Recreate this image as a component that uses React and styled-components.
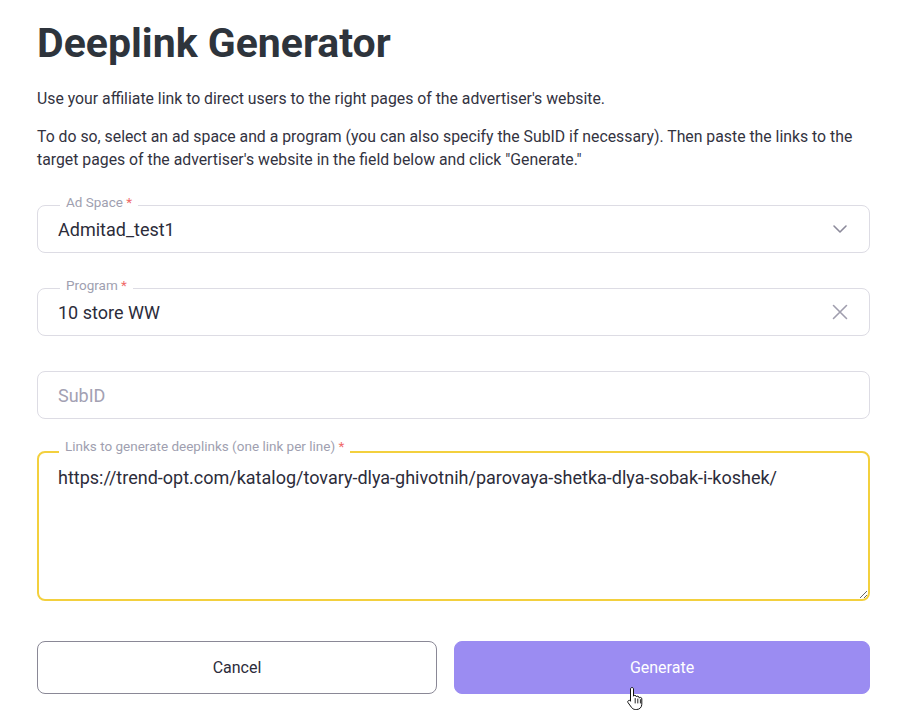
import React from "react";
import styled, { createGlobalStyle } from "styled-components";

const GlobalStyle = createGlobalStyle`
  html, body {
    margin: 0;
    padding: 0;
    background: #ffffff;
  }
  body {
    font-family: Roboto, "Noto Sans", sans-serif;
    color: #2f2f3b;
  }
  * {
    box-sizing: border-box;
  }
`;

const Page = styled.main`
  width: 914px;
  padding: 19px 44px 30px 37px;
`;

const Title = styled.h1`
  margin: 0 0 20px;
  font-size: 41px;
  line-height: 48px;
  font-weight: 700;
  color: #2e343c;
`;

const Text = styled.p`
  margin: 0 0 15px;
  font-size: 15.8px;
  line-height: 23px;
  color: #33333f;
`;

const Form = styled.form`
  display: flex;
  flex-direction: column;
  gap: 35px;
  margin-top: 34px;
`;

const Field = styled.div`
  position: relative;
  display: flex;
  align-items: center;
  height: 48px;
  border: 1px solid #dddce4;
  border-radius: 8px;
`;

const FloatLabel = styled.span`
  position: absolute;
  top: ${(p) => (p.$thick ? "-13px" : "-12px")};
  left: 22px;
  padding: 0 6px;
  background: #ffffff;
  font-size: 13.5px;
  line-height: 16px;
  color: #a09fb0;
  white-space: nowrap;
`;

const Required = styled.span`
  color: #f06a6a;
`;

const Input = styled.input`
  flex: 1;
  min-width: 0;
  height: 100%;
  padding: 0 20px;
  border: none;
  background: transparent;
  outline: none;
  font-family: inherit;
  font-size: 18px;
  color: #2c2c3a;

  &::placeholder {
    color: #a3a1b3;
  }
`;

const IconButton = styled.button`
  display: flex;
  align-items: center;
  justify-content: center;
  width: 24px;
  height: 24px;
  margin-right: 17px;
  padding: 0;
  border: none;
  background: none;
  color: #8c8a9b;
  cursor: pointer;
`;

const TextAreaWrap = styled.div`
  position: relative;
  margin-top: -3px;
`;

const TextArea = styled.textarea`
  display: block;
  width: 100%;
  height: 150px;
  padding: 13px 19px;
  border: 2px solid #f3d03e;
  border-radius: 8px;
  outline: none;
  resize: vertical;
  font-family: inherit;
  font-size: 18px;
  line-height: 24px;
  color: #2c2c3a;
`;

const Actions = styled.div`
  display: grid;
  grid-template-columns: 400px 1fr;
  gap: 17px;
  margin-top: 5px;
`;

const Button = styled.button`
  position: relative;
  height: 53px;
  border-radius: 8px;
  font-family: inherit;
  font-size: 16px;
  cursor: pointer;
  border: 1px solid ${(p) => (p.$primary ? "#9b8cf2" : "#8a8896")};
  background: ${(p) => (p.$primary ? "#9b8cf2" : "#ffffff")};
  color: ${(p) => (p.$primary ? "#ffffff" : "#2c2c3a")};
`;

const Pointer = styled.svg`
  position: absolute;
  left: 172px;
  top: 44px;
  width: 17px;
  height: 24px;
  pointer-events: none;
`;

const ChevronDown = () => (
  <svg width="18" height="18" viewBox="0 0 18 18" fill="none">
    <path d="M3 6l6 6 6-6" stroke="currentColor" strokeWidth="1.6" strokeLinecap="round" strokeLinejoin="round" />
  </svg>
);

const Cross = () => (
  <svg width="18" height="18" viewBox="0 0 18 18" fill="none">
    <path d="M2.5 2.5l13 13M15.5 2.5l-13 13" stroke="#a09eae" strokeWidth="1.6" strokeLinecap="round" />
  </svg>
);

const HandCursor = () => (
  <Pointer viewBox="0 0 17 24">
    <path
      d="M5 1.5c.9 0 1.5.7 1.5 1.5v7.2c.3-.6.8-.9 1.4-.9.8 0 1.4.6 1.4 1.4v.3c.3-.5.8-.8 1.4-.8.8 0 1.4.6 1.4 1.4v.5c.3-.4.8-.7 1.3-.7.8 0 1.4.6 1.4 1.4v5.5c0 2.9-2.2 5.2-5.1 5.2H8.4c-1.6 0-3-.8-3.9-2.1L1 16.6c-.5-.7-.3-1.6.4-2 .6-.4 1.4-.3 1.9.3l.2.3V3c0-.8.7-1.5 1.5-1.5z"
      fill="#ffffff"
      stroke="#111111"
      strokeWidth="1"
      strokeLinejoin="round"
    />
    <path d="M8.2 12.5v4.5M10.8 13v4M13.4 13.6v3.4" stroke="#111111" strokeWidth="0.9" strokeLinecap="round" />
  </Pointer>
);

export default function App() {
  return (
    <Page>
      <GlobalStyle />
      <Title>Deeplink Generator</Title>
      <Text>Use your affiliate link to direct users to the right pages of the advertiser's website.</Text>
      <Text>
        To do so, select an ad space and a program (you can also specify the SubID if necessary). Then paste the
        links to the target pages of the advertiser's website in the field below and click "Generate."
      </Text>

      <Form onSubmit={(e) => e.preventDefault()}>
        <Field>
          <FloatLabel>
            Ad Space <Required>*</Required>
          </FloatLabel>
          <Input defaultValue="Admitad_test1" readOnly />
          <IconButton type="button" aria-label="Open">
            <ChevronDown />
          </IconButton>
        </Field>

        <Field>
          <FloatLabel>
            Program <Required>*</Required>
          </FloatLabel>
          <Input defaultValue="10 store WW" readOnly />
          <IconButton type="button" aria-label="Clear">
            <Cross />
          </IconButton>
        </Field>

        <Field>
          <Input placeholder="SubID" />
        </Field>

        <TextAreaWrap>
          <FloatLabel $thick>
            Links to generate deeplinks (one link per line) <Required>*</Required>
          </FloatLabel>
          <TextArea defaultValue="https://trend-opt.com/katalog/tovary-dlya-ghivotnih/parovaya-shetka-dlya-sobak-i-koshek/" />
        </TextAreaWrap>

        <Actions>
          <Button type="button">Cancel</Button>
          <Button type="submit" $primary>
            Generate
            <HandCursor />
          </Button>
        </Actions>
      </Form>
    </Page>
  );
}
